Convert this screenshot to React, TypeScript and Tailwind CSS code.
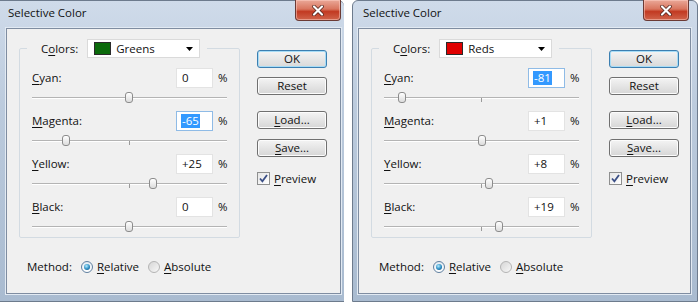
import React from "react";

type Row = { label: string; value: string; v: number; selected?: boolean };

type Props = {
  swatch: string;
  colorName: string;
  rows: Row[];
  cropped?: boolean;
};

// text with one underlined access key
const Acc = ({ text, at = 0 }: { text: string; at?: number }) => (
  <span>
    {text.slice(0, at)}
    <span className="underline underline-offset-[2px]">{text[at]}</span>
    {text.slice(at + 1)}
  </span>
);

const Slider = ({ v, last }: { v: number; last?: boolean }) => {
  const left = 97 + v * 0.97 - 4;
  return (
    <div className={last ? "relative h-[20px]" : "relative h-[23px]"}>
      <div className="absolute left-0 right-0 top-[9px] h-px bg-[#b4b4b4]" />
      <div className="absolute left-0 right-0 top-[10px] h-px bg-white" />
      <div className="absolute left-[97px] top-[10px] h-[4px] w-px bg-[#9a9a9a]" />
      <div
        className="absolute top-[4px] h-[11px] w-[8px] rounded-[3px] border border-[#8c8c8c] bg-gradient-to-b from-white to-[#dcdcdc]"
        style={{ left }}
      />
    </div>
  );
};

const Button = ({ children, primary }: { children: React.ReactNode; primary?: boolean }) => (
  <div
    className={
      primary
        ? "flex h-[18px] w-[70px] items-center justify-center rounded-[3px] border border-[#3c7fb1] bg-gradient-to-b from-[#f4f4f4] to-[#d9d9d9] shadow-[inset_0_0_0_1px_#a7dcf6]"
        : "flex h-[18px] w-[70px] items-center justify-center rounded-[3px] border border-[#707070] bg-gradient-to-b from-[#f4f4f4] to-[#d6d6d6] shadow-[inset_0_0_0_1px_#fcfcfc]"
    }
  >
    {children}
  </div>
);

const Radio = ({ on }: { on?: boolean }) => (
  <div
    className={
      on
        ? "flex h-[12px] w-[12px] items-center justify-center rounded-full border border-[#5f7f9f] bg-gradient-to-b from-[#e4ecf3] to-white"
        : "flex h-[12px] w-[12px] items-center justify-center rounded-full border border-[#b4b4b4] bg-gradient-to-br from-[#d6d6d6] to-[#f8f8f8]"
    }
  >
    {on && (
      <div className="h-[6px] w-[6px] rounded-full bg-[radial-gradient(circle_at_40%_35%,#b4ecff,#2a8cc2_55%,#0e4a7a)]" />
    )}
  </div>
);

const CloseButton = () => (
  <div className="flex h-[21px] w-[46px] items-center justify-center rounded-b-[4px] border border-t-0 border-[#6b3a34] bg-[linear-gradient(to_bottom,#eaa898_0%,#d9765f_45%,#c23a22_58%,#d0644b_100%)] shadow-[inset_0_0_0_1px_rgba(255,210,200,0.5)]">
    <svg width="12" height="11" viewBox="0 0 12 11">
      <path d="M2 1.5 L10 9.5 M10 1.5 L2 9.5" stroke="#4a1f18" strokeWidth="3.6" strokeLinecap="round" />
      <path d="M2 1.5 L10 9.5 M10 1.5 L2 9.5" stroke="#ffffff" strokeWidth="2.2" strokeLinecap="round" />
    </svg>
  </div>
);

const SelectiveColor = ({ swatch, colorName, rows, cropped }: Props) => (
  <div
    className={
      cropped
        ? "flex h-[302px] w-[344px] flex-col rounded-tr-[6px] border border-l-0 border-r-0 border-[#6d7b8d] bg-[linear-gradient(to_bottom,#cfdbea,#bccbdd_35%,#a9bbd0)] pb-[7px] pl-[6px] pr-[3px]"
        : "flex h-[302px] w-[346px] flex-col rounded-t-[6px] border border-[#6d7b8d] bg-[linear-gradient(to_bottom,#cfdbea,#bccbdd_35%,#a9bbd0)] pb-[7px] pl-[5px] pr-[6px]"
    }
  >
    <div className="flex h-[27px] items-start justify-between">
      <span className={cropped ? "pl-[2px] pt-[6px]" : "pl-[5px] pt-[6px]"}>Selective Color</span>
      <div className={cropped ? "-mt-px" : "-mt-px mr-[2px]"}>
        <CloseButton />
      </div>
    </div>
    <div className="flex flex-1 flex-col border border-[#7f8da1] bg-[#f0f0f0] pl-[12px] shadow-[0_0_0_1px_#e2eaf3]">
      <div className="flex">
        <fieldset className="mt-[10px] w-[221px] rounded-[2px] border border-[#d3dbe2] px-[12px] pt-[10px]">
          <legend className="-ml-[5px] flex items-center gap-[9px] pl-[14px] pr-[7px]">
            <span>
              <Acc text="Colors:" at={1} />
            </span>
            <div className="flex h-[19px] w-[113px] items-center border border-[#dadada] bg-white pl-[6px] pr-[6px]">
              <div className="h-[13px] w-[17px] border border-[#2a2a2a]" style={{ background: swatch }} />
              <span className="ml-[5px] flex-1">{colorName}</span>
              <svg width="7" height="4" viewBox="0 0 7 4">
                <path d="M0 0 H7 L3.5 4 Z" fill="#000" />
              </svg>
            </div>
          </legend>
          {rows.map((r, i) => (
            <div key={r.label}>
              <div className="flex h-[20px] items-center">
                <span className="flex-1">
                  <Acc text={r.label} />
                </span>
                <div
                  className={
                    r.selected
                      ? "flex h-[20px] w-[37px] items-center border border-[#8fbbe6] bg-white pl-[4px]"
                      : "flex h-[20px] w-[37px] items-center border border-[#e3e3e3] bg-white pl-[5px]"
                  }
                >
                  {r.selected ? (
                    <span className="bg-[#3399ff] px-px leading-[14px] text-white">{r.value}</span>
                  ) : (
                    r.value
                  )}
                </div>
                <span className="ml-[5px] w-[9px]">%</span>
              </div>
              <Slider v={r.v} last={i === rows.length - 1} />
            </div>
          ))}
        </fieldset>
        <div className="ml-[17px] flex flex-col pt-[21px]">
          <Button primary>OK</Button>
          <div className="mt-[9px]">
            <Button>Reset</Button>
          </div>
          <div className="mt-[16px]">
            <Button>
              <Acc text="Load..." />
            </Button>
          </div>
          <div className="mt-[10px]">
            <Button>
              <Acc text="Save..." />
            </Button>
          </div>
          <div className="mt-[15px] flex items-center">
            <div className="flex h-[13px] w-[13px] items-center justify-center border border-[#8e8f8f] bg-gradient-to-br from-[#e6e6e6] to-white">
              <svg width="11" height="11" viewBox="0 0 11 11">
                <path d="M2 5.5 L4.4 8.3 L9 2" fill="none" stroke="#3b4f86" strokeWidth="1.8" />
              </svg>
            </div>
            <span className="ml-[4px]">
              <Acc text="Preview" />
            </span>
          </div>
        </div>
      </div>
      <div className="mt-[21px] flex h-[16px] items-center pl-[8px]">
        <span>Method:</span>
        <div className="ml-[9px]">
          <Radio on />
        </div>
        <span className="ml-[4px]">
          <Acc text="Relative" />
        </span>
        <div className="ml-[9px]">
          <Radio />
        </div>
        <span className="ml-[4px]">
          <Acc text="Absolute" />
        </span>
      </div>
    </div>
  </div>
);

export default function App() {
  return (
    <div className="flex h-[303px] w-[700px] gap-[8px] overflow-hidden bg-white font-['Open_Sans',sans-serif] text-[11.5px] leading-none text-[#111]">
      <SelectiveColor
        cropped
        swatch="#0b6a0b"
        colorName="Greens"
        rows={[
          { label: "Cyan:", value: "0", v: 0 },
          { label: "Magenta:", value: "-65", v: -65, selected: true },
          { label: "Yellow:", value: "+25", v: 25 },
          { label: "Black:", value: "0", v: 0 },
        ]}
      />
      <SelectiveColor
        swatch="#e00000"
        colorName="Reds"
        rows={[
          { label: "Cyan:", value: "-81", v: -81, selected: true },
          { label: "Magenta:", value: "+1", v: 1 },
          { label: "Yellow:", value: "+8", v: 8 },
          { label: "Black:", value: "+19", v: 19 },
        ]}
      />
    </div>
  );
}
